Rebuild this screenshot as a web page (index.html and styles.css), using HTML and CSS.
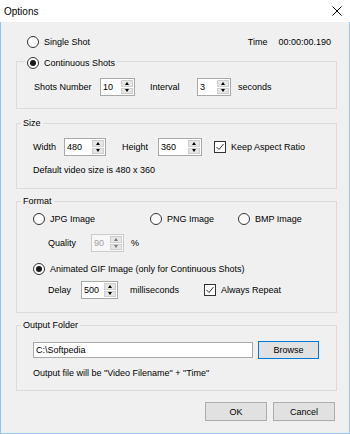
FILE: index.html
```html
<!DOCTYPE html>
<html>
<head>
<meta charset="utf-8">
<link rel="stylesheet" href="styles.css">
</head>
<body>
<div class="window">
  <div class="titlebar">
    <span class="title">Options</span>
    <svg class="close" width="10" height="10" viewBox="0 0 10 10"><path d="M0.5 0.5 L9.5 9.5 M9.5 0.5 L0.5 9.5" stroke="#000" stroke-width="1" fill="none"/></svg>
  </div>
  <div class="body">
    <div class="top-row">
      <span class="opt"><span class="radio"></span><span>Single Shot</span></span>
      <span class="time"><span>Time</span><span>00:00:00.190</span></span>
    </div>

    <fieldset class="group g-cont">
      <legend class="lg-radio"><span class="opt"><span class="radio on"></span><span>Continuous Shots</span></span></legend>
      <div class="inner in-cont">
        <div class="row">
          <span class="lbl w66">Shots Number</span>
          <span class="spin w35"><span class="val">10</span><span class="arrows"><span><i class="up"></i></span><span><i class="dn"></i></span></span></span>
          <span class="lbl w47 ml15">Interval</span>
          <span class="spin w34"><span class="val">3</span><span class="arrows"><span><i class="up"></i></span><span><i class="dn"></i></span></span></span>
          <span class="lbl ml7">seconds</span>
        </div>
      </div>
    </fieldset>

    <fieldset class="group g-size">
      <legend>Size</legend>
      <div class="inner in-size">
        <div class="row">
          <span class="lbl w31">Width</span>
          <span class="spin w42"><span class="val">480</span><span class="arrows"><span><i class="up"></i></span><span><i class="dn"></i></span></span></span>
          <span class="lbl w36 ml16">Height</span>
          <span class="spin w44"><span class="val">360</span><span class="arrows"><span><i class="up"></i></span><span><i class="dn"></i></span></span></span>
          <span class="opt ml12"><span class="check"><svg width="10" height="10" viewBox="0 0 10 10"><path d="M1.5 5 L4 7.5 L8.5 2" stroke="#333" stroke-width="1" fill="none"/></svg></span><span>Keep Aspect Ratio</span></span>
        </div>
        <div class="note">Default video size is 480 x 360</div>
      </div>
    </fieldset>

    <fieldset class="group g-format">
      <legend>Format</legend>
      <div class="inner in-format">
        <div class="row r14">
          <span class="opt w117"><span class="radio"></span><span>JPG Image</span></span>
          <span class="opt w88"><span class="radio"></span><span>PNG Image</span></span>
          <span class="opt"><span class="radio"></span><span>BMP Image</span></span>
        </div>
        <div class="row q-row">
          <span class="lbl w43 ml15">Quality</span>
          <span class="spin w33 disabled"><span class="val">90</span><span class="arrows"><span><i class="up"></i></span><span><i class="dn"></i></span></span></span>
          <span class="lbl ml7">%</span>
        </div>
        <div class="row r14 gif-row">
          <span class="opt"><span class="radio on"></span><span>Animated GIF Image (only for Continuous Shots)</span></span>
        </div>
        <div class="row d-row">
          <span class="lbl w33 ml15">Delay</span>
          <span class="spin w37"><span class="val">500</span><span class="arrows"><span><i class="up"></i></span><span><i class="dn"></i></span></span></span>
          <span class="lbl w74 ml12">milliseconds</span>
          <span class="opt"><span class="check"><svg width="10" height="10" viewBox="0 0 10 10"><path d="M1.5 5 L4 7.5 L8.5 2" stroke="#333" stroke-width="1" fill="none"/></svg></span><span>Always Repeat</span></span>
        </div>
      </div>
    </fieldset>

    <fieldset class="group g-out">
      <legend>Output Folder</legend>
      <div class="inner in-out">
        <div class="row">
          <span class="textbox">C:\Softpedia</span>
          <span class="btn browse">Browse</span>
        </div>
        <div class="note">Output file will be "Video Filename" + "Time"</div>
      </div>
    </fieldset>

    <div class="buttons">
      <span class="btn">OK</span>
      <span class="btn">Cancel</span>
    </div>
  </div>
</div>
</body>
</html>
```

FILE: styles.css
```css
* { box-sizing: border-box; }
html, body { margin: 0; padding: 0; }
body {
  width: 350px;
  height: 434px;
  overflow: hidden;
  background: #f0f0f0;
  font-family: "Liberation Sans", Arial, sans-serif;
  font-size: 9px;
  color: #000;
}
.window {
  width: 350px;
  height: 434px;
  display: flex;
  flex-direction: column;
}
.titlebar {
  height: 22px;
  flex: none;
  background: #fff;
  display: flex;
  align-items: center;
  justify-content: space-between;
  padding: 0 8px 0 4px;
}
.title { font-size: 10px; }
.body {
  flex: 1;
  border: 1px solid #94c2ef;
  border-top: none;
  padding: 13px 12px 0 15px;
  display: flex;
  flex-direction: column;
}
.top-row {
  height: 14px;
  display: flex;
  align-items: center;
  justify-content: space-between;
  padding: 0 6px 0 11px;
}
.time { display: flex; gap: 11px; }
.opt { display: inline-flex; align-items: center; gap: 5px; }
.radio {
  width: 12px;
  height: 12px;
  border: 1px solid #333;
  border-radius: 50%;
  background: #fff;
  display: inline-flex;
  align-items: center;
  justify-content: center;
  flex: none;
}
.radio.on::after {
  content: "";
  width: 6px;
  height: 6px;
  border-radius: 50%;
  background: #1a1a1a;
}
.check {
  width: 12px;
  height: 12px;
  border: 1px solid #333;
  background: #fff;
  display: inline-flex;
  align-items: center;
  justify-content: center;
  flex: none;
}
.group {
  margin: 0;
  padding: 0;
  border: 1px solid #dcdcdc;
  min-width: 0;
}
.group legend {
  margin-left: 4px;
  padding: 0 2px;
  line-height: 12px;
}
.group legend.lg-radio {
  margin-left: 8px;
  padding: 4px 2px 0 2px;
  line-height: 14px;
}
.g-cont { margin-top: 3px; }
.g-size { margin-top: 8px; }
.g-format { margin-top: 6px; }
.g-out { margin-top: 6px; }
.inner { padding-left: 16px; }
.in-cont { padding: 8px 0 12px 17px; }
.in-size { padding-top: 9px; padding-bottom: 12px; }
.in-format { padding-top: 5px; padding-bottom: 13px; }
.in-out { padding-top: 10px; padding-bottom: 11px; }
.row {
  display: flex;
  align-items: center;
  height: 18px;
}
.row.r14 { height: 14px; }
.q-row { margin-top: 8px; }
.gif-row { margin-top: 10px; }
.d-row { margin-top: 5px; }
.lbl { flex: none; white-space: nowrap; }
.note { margin-top: 8px; line-height: 12px; }
.w31 { width: 31px; } .w33 { width: 33px; } .w34 { width: 34px; } .w35 { width: 35px; }
.w36 { width: 36px; } .w37 { width: 37px; } .w42 { width: 42px; } .w43 { width: 43px; }
.w44 { width: 44px; } .w47 { width: 47px; } .w66 { width: 66px; } .w74 { width: 74px; }
.w88 { width: 88px; } .w117 { width: 117px; }
.ml7 { margin-left: 7px; } .ml12 { margin-left: 12px; } .ml15 { margin-left: 15px; } .ml16 { margin-left: 16px; }
.spin {
  display: flex;
  height: 18px;
  border: 1px solid #a9a9a9;
  background: #fff;
  flex: none;
}
.spin .val {
  flex: 1;
  padding-left: 2px;
  line-height: 16px;
}
.spin .arrows {
  width: 12px;
  margin: 1px;
  display: flex;
  flex-direction: column;
  gap: 1px;
}
.spin .arrows span {
  flex: 1;
  background: #e6e6e6;
  border: 1px solid #cfcfcf;
  display: flex;
  align-items: center;
  justify-content: center;
}
.up, .dn { width: 0; height: 0; border-left: 2.5px solid transparent; border-right: 2.5px solid transparent; }
.up { border-bottom: 3px solid #000; }
.dn { border-top: 3px solid #000; }
.spin.disabled { border-color: #cccccc; background: #f7f7f7; }
.spin.disabled .val { color: #a0a0a0; }
.spin.disabled .up { border-bottom-color: #777; }
.spin.disabled .dn { border-top-color: #777; }
.textbox {
  width: 220px;
  height: 16px;
  border: 1px solid #a9a9a9;
  background: #fff;
  padding-left: 2px;
  line-height: 14px;
  flex: none;
}
.btn {
  display: inline-flex;
  align-items: center;
  justify-content: center;
  background: #e1e1e1;
  border: 1px solid #adadad;
  height: 19px;
  width: 62px;
  flex: none;
}
.browse {
  margin-left: 5px;
  width: 61px;
  height: 18px;
  border-color: #0078d7;
  background: #e1e1e1;
}
.buttons {
  margin-top: 11px;
  display: flex;
  justify-content: flex-end;
  gap: 6px;
  padding-right: 2px;
}
```
